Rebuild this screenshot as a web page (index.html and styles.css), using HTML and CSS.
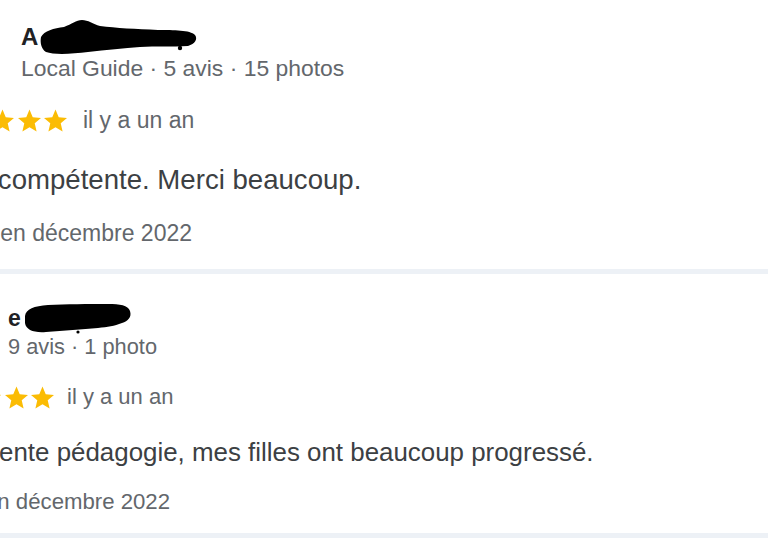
FILE: index.html
```html
<!DOCTYPE html>
<html lang="fr">
<head>
<meta charset="utf-8">
<title>Avis</title>
<link rel="stylesheet" href="styles.css">
</head>
<body>
<main class="reviews">
  <article class="review review--first">
    <header class="review-head">
      <div class="avatar"></div>
      <div class="author">
        <div class="author-name">A<svg class="redact redact--one" width="160" height="36" viewBox="0 0 160 36"><path d="M1 18 C4 12 14 9 24 8 C32 5 36 1 42 1 C48 1 53 5 60 7 C76 9 96 10 118 11 C134 11 150 11 155 16 C158 20 155 25 148 27 C132 28 116 27 100 28 C84 29 66 31 48 33 C32 35 14 36 6 33 C1 30 0 23 1 18 Z"/><circle cx="140" cy="29" r="2.2"/></svg></div>
        <div class="author-meta">Local Guide · 5 avis · 15 photos</div>
      </div>
    </header>
    <div class="rating">
      <span class="stars">
        <svg class="star" viewBox="2 1.5 20 20"><path d="M12 17.27L18.18 21l-1.64-7.03L22 9.24l-7.19-.61L12 2 9.19 8.63 2 9.24l5.46 4.73L5.82 21z"/></svg>
        <svg class="star" viewBox="2 1.5 20 20"><path d="M12 17.27L18.18 21l-1.64-7.03L22 9.24l-7.19-.61L12 2 9.19 8.63 2 9.24l5.46 4.73L5.82 21z"/></svg>
        <svg class="star" viewBox="2 1.5 20 20"><path d="M12 17.27L18.18 21l-1.64-7.03L22 9.24l-7.19-.61L12 2 9.19 8.63 2 9.24l5.46 4.73L5.82 21z"/></svg>
        <svg class="star" viewBox="2 1.5 20 20"><path d="M12 17.27L18.18 21l-1.64-7.03L22 9.24l-7.19-.61L12 2 9.19 8.63 2 9.24l5.46 4.73L5.82 21z"/></svg>
        <svg class="star" viewBox="2 1.5 20 20"><path d="M12 17.27L18.18 21l-1.64-7.03L22 9.24l-7.19-.61L12 2 9.19 8.63 2 9.24l5.46 4.73L5.82 21z"/></svg>
      </span>
      <span class="when">il y a un an</span>
    </div>
    <p class="review-text">Très compétente. Merci beaucoup.</p>
    <p class="review-visit">Visité en décembre 2022</p>
  </article>

  <article class="review review--second">
    <header class="review-head">
      <div class="avatar"></div>
      <div class="author">
        <div class="author-name">e<svg class="redact redact--two" width="112" height="34" viewBox="0 0 112 34"><path d="M3 15 C4 8 12 5 26 4 C44 3 66 3 86 3 C98 3 106 4 108 10 C110 16 106 20 100 22 C92 25 86 26 76 27 C60 28 42 30 24 31 C12 32 4 29 3 22 Z"/><circle cx="56" cy="31" r="1.6"/></svg></div>
        <div class="author-meta">9 avis · 1 photo</div>
      </div>
    </header>
    <div class="rating">
      <span class="stars">
        <svg class="star" viewBox="2 1.5 20 20"><path d="M12 17.27L18.18 21l-1.64-7.03L22 9.24l-7.19-.61L12 2 9.19 8.63 2 9.24l5.46 4.73L5.82 21z"/></svg>
        <svg class="star" viewBox="2 1.5 20 20"><path d="M12 17.27L18.18 21l-1.64-7.03L22 9.24l-7.19-.61L12 2 9.19 8.63 2 9.24l5.46 4.73L5.82 21z"/></svg>
        <svg class="star" viewBox="2 1.5 20 20"><path d="M12 17.27L18.18 21l-1.64-7.03L22 9.24l-7.19-.61L12 2 9.19 8.63 2 9.24l5.46 4.73L5.82 21z"/></svg>
        <svg class="star" viewBox="2 1.5 20 20"><path d="M12 17.27L18.18 21l-1.64-7.03L22 9.24l-7.19-.61L12 2 9.19 8.63 2 9.24l5.46 4.73L5.82 21z"/></svg>
        <svg class="star" viewBox="2 1.5 20 20"><path d="M12 17.27L18.18 21l-1.64-7.03L22 9.24l-7.19-.61L12 2 9.19 8.63 2 9.24l5.46 4.73L5.82 21z"/></svg>
      </span>
      <span class="when">il y a un an</span>
    </div>
    <p class="review-text">Excellente pédagogie, mes filles ont beaucoup progressé.</p>
    <p class="review-visit">Visité en décembre 2022</p>
  </article>
</main>
</body>
</html>
```

FILE: styles.css
```css
html, body {
  margin: 0;
  padding: 0;
  background: #ffffff;
  overflow: hidden;
}

body {
  font-family: "Liberation Sans", Arial, sans-serif;
  color: #3c4043;
}

.reviews {
  display: flex;
  flex-direction: column;
}

.review {
  display: flex;
  flex-direction: column;
  border-bottom: 5px solid #edf1f6;
  white-space: nowrap;
}

.review--first {
  margin-left: -62px;
  padding: 23px 0 22px;
  --meta-gap: 3px;
  --rating-gap: 24px;
  --text-gap: 30px;
  --visit-gap: 23px;
  --text-indent: -2px;
  --name-size: 24px;
  --meta-size: 22.9px;
  --when-size: 23px;
  --text-size: 27.6px;
  --visit-size: 23px;
  --when-gap: 16px;
}

.review--second {
  margin-left: -75px;
  padding: 30px 0 17px;
  --meta-gap: 1px;
  --rating-gap: 22px;
  --text-gap: 25px;
  --visit-gap: 20px;
  --text-indent: 5px;
  --name-size: 23px;
  --meta-size: 21.8px;
  --when-size: 22px;
  --text-size: 25.9px;
  --visit-size: 22.2px;
  --when-gap: 13px;
}

.review-head {
  display: flex;
  align-items: flex-start;
  gap: 23px;
}

.avatar {
  width: 60px;
  height: 40px;
  border-radius: 50%;
  background: #c5cbd3;
  flex: none;
}

.author {
  display: flex;
  flex-direction: column;
}

.author-name {
  display: flex;
  align-items: center;
  height: 28px;
  font-size: var(--name-size);
  font-weight: 700;
  color: #202124;
}

.redact {
  fill: #000;
  flex: none;
}

.redact--one {
  margin-left: 2px;
}

.redact--two {
  margin-left: 1px;
}

.author-meta {
  margin-top: var(--meta-gap);
  height: 28px;
  line-height: 28px;
  font-size: var(--meta-size);
  color: #63676c;
}

.rating {
  margin-top: var(--rating-gap);
  height: 28px;
  display: flex;
  align-items: center;
}

.stars {
  display: flex;
  gap: 3.5px;
}

.star {
  width: 23px;
  height: 23px;
  fill: #fbbc04;
  display: block;
}

.when {
  margin-left: var(--when-gap);
  font-size: var(--when-size);
  line-height: 28px;
  color: #63676c;
}

.review-text {
  margin: var(--text-gap) 0 0;
  text-indent: var(--text-indent);
  font-size: var(--text-size);
  line-height: 32px;
  color: #3c4043;
}

.review-visit {
  margin: var(--visit-gap) 0 0;
  font-size: var(--visit-size);
  line-height: 28px;
  color: #63676c;
}
```
